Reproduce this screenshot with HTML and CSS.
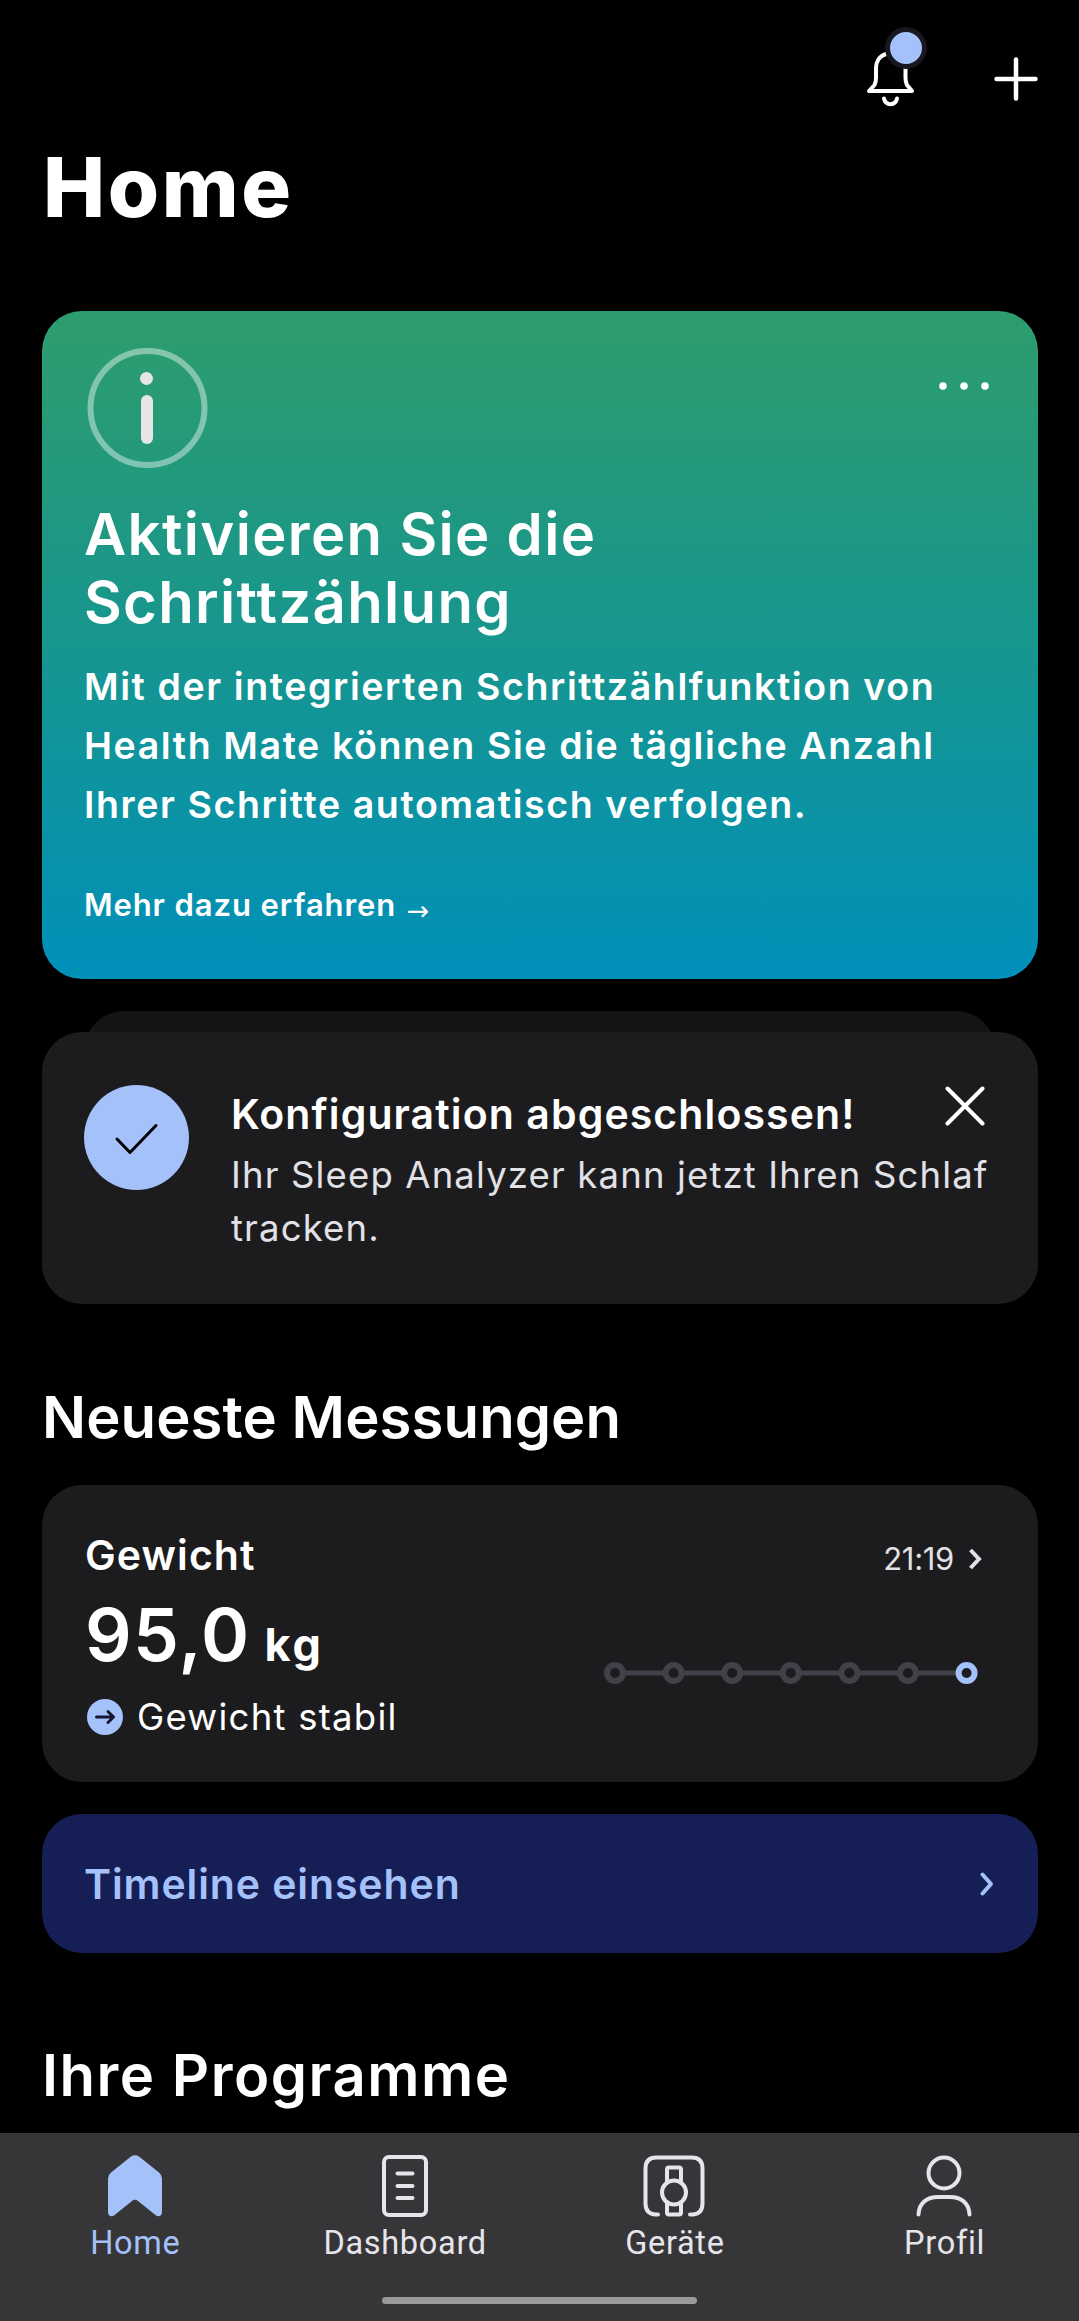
FILE: index.html
```html
<!DOCTYPE html>
<html lang="de">
<head>
    <meta charset="utf-8">
    <meta name="viewport" content="width=device-width, initial-scale=1">
    <title>Home</title>
    <link rel="stylesheet" href="styles.css">
</head>
<body>
    <header class="topbar">
        <button class="icon-button" title="Benachrichtigungen">
            <svg width="64" height="90" viewBox="0 0 64 90">
                <path d="M23 35C16 37 13 43 13 49v10q0 4-1.500 7l-5.500 6h43l-5-6q-1.500-3-1.500-7V47" />
                <path d="M21 79.500c1.500 7.500 11.500 7.500 13 0" />
                <circle class="badge" cx="43" cy="29" r="18.500" />
            </svg>
        </button>
        <button class="icon-button" title="Hinzufügen">
            <svg class="plus" width="44" height="44" viewBox="0 0 44 44"><path d="M22 2.500v39M2.500 22h39" /></svg>
        </button>
    </header>

    <main>
        <h1>Home</h1>

        <article class="promo">
            <div class="promo-top">
                <svg width="121" height="120" viewBox="0 0 121 120">
                    <circle class="info-ring" cx="60.500" cy="60" r="57" />
                    <circle class="info-i" cx="59.500" cy="30.500" r="6.500" />
                    <rect class="info-i" x="54" y="47" width="12" height="49" rx="6" />
                </svg>
                <svg class="more" width="50" height="8" viewBox="0 0 50 8">
                    <circle cx="4" cy="4" r="3.800" /><circle cx="25" cy="4" r="3.800" /><circle cx="46" cy="4" r="3.800" />
                </svg>
            </div>
            <h2 class="promo-title">Aktivieren Sie die<br>Schrittzählung</h2>
            <p class="promo-text">
                Mit der integrierten Schrittzählfunktion von<br>
                Health Mate können Sie die tägliche Anzahl<br>
                Ihrer Schritte automatisch verfolgen.
            </p>
            <a class="promo-link">Mehr dazu erfahren <span class="arrow">→</span></a>
        </article>

        <article class="notice">
            <svg class="check" width="105" height="105" viewBox="0 0 105 105">
                <circle cx="52.500" cy="52.500" r="52.500" />
                <path d="M33 54l13 13.500 26-27" />
            </svg>
            <div class="notice-body">
                <h3>Konfiguration abgeschlossen!</h3>
                <p>Ihr Sleep Analyzer kann jetzt Ihren Schlaf<br>tracken.</p>
            </div>
            <svg class="close" width="40" height="40" viewBox="0 0 40 40"><path d="M2.500 2.500l35 35M37.500 2.500l-35 35" /></svg>
        </article>

        <h2 class="section-title">Neueste Messungen</h2>

        <article class="measure">
            <div>
                <h3>Gewicht</h3>
                <div class="value">95,0<span class="unit">kg</span></div>
                <div class="trend">
                    <svg width="36" height="36" viewBox="0 0 36 36">
                        <circle cx="18" cy="18" r="18" />
                        <path d="M9.500 18h17M21 12.500l5.500 5.500-5.500 5.500" />
                    </svg>
                    <span>Gewicht stabil</span>
                </div>
            </div>
            <div class="history">
                <div class="time">
                    <span>21:19</span>
                    <svg width="14" height="22" viewBox="0 0 14 22"><path d="M2.500 2l8.500 9-8.500 9" /></svg>
                </div>
                <svg class="chart" width="376" height="24" viewBox="0 0 376 24">
                    <path d="M12 12h351.600" />
                    <circle cx="12" cy="12" r="8" />
                    <circle cx="70.600" cy="12" r="8" />
                    <circle cx="129.200" cy="12" r="8" />
                    <circle cx="187.800" cy="12" r="8" />
                    <circle cx="246.400" cy="12" r="8" />
                    <circle cx="305" cy="12" r="8" />
                    <circle class="current" cx="363.600" cy="12" r="8" />
                </svg>
            </div>
        </article>

        <a class="timeline">
            <span>Timeline einsehen</span>
            <svg width="16" height="26" viewBox="0 0 16 26"><path d="M3.500 3.500l8.500 9.500-8.500 9.500" /></svg>
        </a>

        <h2 class="section-title -programs">Ihre Programme</h2>
    </main>

    <nav class="tabbar">
        <a class="tab -active">
            <svg width="62" height="62" viewBox="0 0 62 62">
                <path class="solid" d="M27 1.500q4-2.500 8 0l20 16q3 2.500 3 6v34q-1 5.500-6 3L34 46q-3-2.500-6 0L10 60.500q-5 2.500-6-3v-34q0-3.500 3-6z" />
            </svg>
            <span>Home</span>
        </a>
        <a class="tab">
            <svg width="62" height="62" viewBox="0 0 62 62">
                <rect x="10" y="2" width="42" height="58" rx="5" />
                <path d="M23.500 18.500h15M23.500 31h15M23.500 43h15" />
            </svg>
            <span>Dashboard</span>
        </a>
        <a class="tab">
            <svg width="62" height="62" viewBox="0 0 62 62">
                <path d="M15 59.500h-3q-9.500-1-9.500-11v-35q0-11 11-11h35q11 0 11 11v35q0 10-9.500 11h-3" />
                <circle cx="31" cy="37.500" r="12" />
                <path d="M24 26V14.500q0-2 2-2h10q2 0 2 2V26M24 49v8.500q0 2 2 2h10q2 0 2-2V49" />
            </svg>
            <span>Geräte</span>
        </a>
        <a class="tab">
            <svg width="62" height="62" viewBox="0 0 62 62">
                <circle cx="31" cy="18" r="15.500" />
                <path d="M5.500 59.500C6 47 15 42 25 42h12c10 0 19 5 19.500 17.500" />
            </svg>
            <span>Profil</span>
        </a>
        <div class="home-indicator"></div>
    </nav>
</body>
</html>
```
FILE: styles.css
```css
* { box-sizing: border-box; margin: 0; }

:root {
    --accent: #a4c1fa;
    --card: #1c1c1e;
    --radius: 40px;
    background-color: #000;
    color: #fff;
    font-family: Inter, sans-serif;
}

body {
    height: 2321px;
    display: flex;
    flex-direction: column;
    overflow: hidden;
}

svg {
    display: block;
    flex: none;
    fill: none;
    stroke: currentColor;
    stroke-width: 4;
    stroke-linecap: round;
    stroke-linejoin: round;
}

h3 {
    font-size: 41px;
    font-weight: 600;
    line-height: 48px;
    letter-spacing: 1.1px;
}

.topbar {
    flex: none;
    height: 138px;
    padding: 19px 41px 0 0;
    display: flex;
    justify-content: flex-end;
    gap: 67px;
}

.icon-button {
    border: none;
    background: none;
    padding: 0;
    color: inherit;
    align-self: flex-start;
}

.plus {
    margin-top: 38px;
    stroke-width: 4.5;
}

.badge {
    fill: var(--accent);
    stroke: #17181f;
    stroke-width: 5;
}

main {
    flex: 1;
    min-height: 0;
    padding: 0 41px 0 42px;
    overflow: hidden;
}

h1 {
    padding-left: 1px;
    font-size: 83px;
    line-height: 98px;
    font-weight: 800;
    letter-spacing: 2.6px;
}

.promo {
    height: 668px;
    margin-top: 75px;
    padding: 37px 45px 0 42px;
    border-radius: var(--radius);
    background: linear-gradient(#2e9c6c, #17968f 50%, #0090b9);
    white-space: nowrap;
}

.promo-top {
    display: flex;
    justify-content: space-between;
    padding: 0 4px 0 3px;
}

.more {
    margin-top: 34px;
    fill: currentColor;
    stroke: none;
}

.info-ring {
    stroke: rgb(255 255 255 / .42);
    stroke-width: 6;
}

.info-i {
    fill: #e6e6e6;
    stroke: none;
}

.promo-title {
    margin-top: 32px;
    font-size: 58px;
    line-height: 68px;
    font-weight: 600;
    letter-spacing: 1.35px;
}

.promo-text {
    margin-top: 21px;
    font-size: 37.5px;
    line-height: 59px;
    font-weight: 600;
    letter-spacing: 1.6px;
}

.promo-link {
    display: block;
    margin-top: 51px;
    font-size: 31px;
    line-height: 40px;
    font-weight: 600;
    letter-spacing: .9px;
}

.arrow {
    margin-left: 2px;
    font: 27px/1 "DejaVu Sans", sans-serif;
    vertical-align: -4px;
}

.notice {
    position: relative;
    height: 272px;
    margin-top: 53px;
    padding: 53px 54px 0 42px;
    display: flex;
    border-radius: var(--radius);
    background: var(--card);
}

/* edge of the next notice in the stack */
.notice::before {
    content: "";
    position: absolute;
    z-index: -1;
    inset: -21px 42px auto;
    height: 80px;
    border-radius: var(--radius);
    background: #141414;
}

.check circle {
    fill: var(--accent);
    stroke: none;
}

.check path {
    stroke: #000;
    stroke-width: 3;
}

.notice-body {
    flex: 1;
    margin: 5px 0 0 42px;
    white-space: nowrap;
}

.notice p {
    margin-top: 11px;
    color: #e2e1e6;
    font-size: 36.5px;
    line-height: 53px;
    letter-spacing: 1.15px;
}

.close {
    position: absolute;
    top: 54px;
    right: 53px;
}

.section-title {
    margin-top: 79px;
    font-size: 58px;
    line-height: 68px;
    font-weight: 600;
    letter-spacing: .1px;
}

.-programs {
    margin-top: 88px;
    letter-spacing: 1.5px;
}

.measure {
    height: 297px;
    margin-top: 34px;
    padding: 46px 56px 0 43px;
    display: flex;
    justify-content: space-between;
    border-radius: var(--radius);
    background: var(--card);
}

.value {
    margin-top: 13px;
    font-size: 73px;
    line-height: 86px;
    font-weight: 600;
    letter-spacing: 1.3px;
}

.unit {
    margin-left: 14px;
    font-size: 45px;
    line-height: 1;
    font-weight: 700;
    letter-spacing: 3px;
}

.trend {
    margin: 17px 0 0 2px;
    display: flex;
    align-items: center;
    gap: 14px;
    font-size: 36.5px;
    line-height: 44px;
    letter-spacing: 1.25px;
}

.trend circle {
    fill: var(--accent);
    stroke: none;
}

.trend path {
    stroke: #14182e;
    stroke-width: 3;
}

.history {
    display: flex;
    flex-direction: column;
    align-items: flex-end;
    padding-top: 8px;
}

.time {
    display: flex;
    align-items: center;
    gap: 14px;
    color: #e2e1e6;
    font-size: 31px;
    line-height: 40px;
    letter-spacing: -.3px;
}

.time svg {
    stroke-linecap: butt;
    stroke-linejoin: miter;
}

.chart {
    margin: 82px 3px 0 0;
    stroke: #404149;
}

.chart path { stroke-width: 5; }

.chart circle {
    fill: var(--card);
    stroke-width: 6;
}

.chart .current { stroke: var(--accent); }

.timeline {
    height: 139px;
    margin-top: 32px;
    padding: 0 43px 0 42px;
    display: flex;
    align-items: center;
    justify-content: space-between;
    border-radius: var(--radius);
    background: #161e56;
    color: var(--accent);
    font-size: 41px;
    font-weight: 600;
    letter-spacing: .9px;
}

.tabbar {
    flex: none;
    height: 188px;
    padding-top: 22px;
    display: grid;
    grid-template-columns: repeat(4, 1fr);
    align-content: start;
    background: #363638;
    color: #e6e5ea;
}

.tab {
    display: flex;
    flex-direction: column;
    align-items: center;
    font: 32.5px/40px Roboto, sans-serif;
    letter-spacing: .7px;
}

.tab span { margin: 6px 0 0 1px; }

.-active { color: var(--accent); }

.solid {
    fill: currentColor;
    stroke: none;
}

.home-indicator {
    grid-column: 1 / -1;
    justify-self: center;
    width: 315px;
    height: 7px;
    margin-top: 34px;
    border-radius: 4px;
    background: #9a9a9a;
}
```
